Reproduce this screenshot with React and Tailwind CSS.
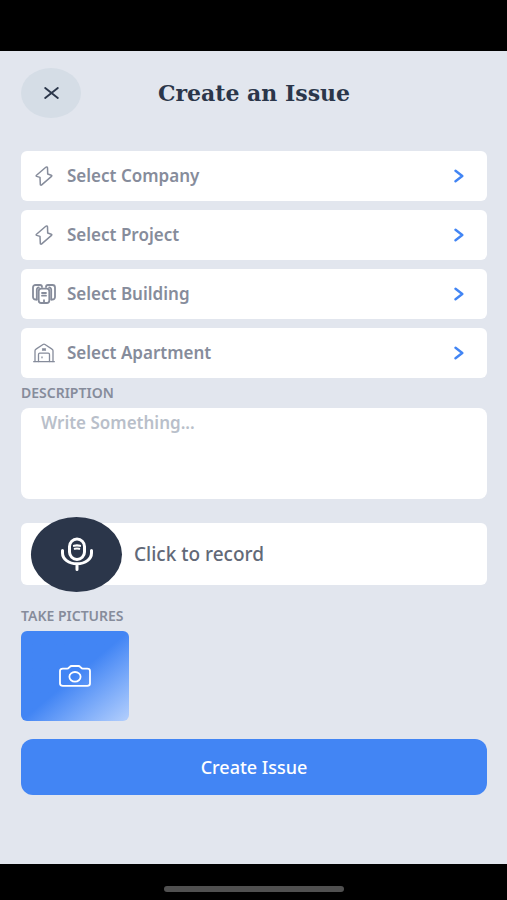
import React, { useState } from "react";

const BoltIcon = () => (
  <svg width="18" height="20" viewBox="0 0 18 20" fill="none" stroke="currentColor" strokeWidth="1.500" strokeLinejoin="round" strokeLinecap="round">
    <path d="M10.800 1.300 1.500 9.200c-.5.5-.4 1 .2 1.200l3.300 1 .3 6.900c.1.900.8 1.100 1.400.6l9.800-8.500c.5-.5.4-1-.2-1.200l-3.600-1.200-.2-6.200c-.1-.9-1-1.100-1.700-.5Z" />
  </svg>
);

const BuildingIcon = () => (
  <svg width="24" height="20" viewBox="0 0 24 20" fill="none" stroke="currentColor" strokeWidth="1.800" strokeLinejoin="round" strokeLinecap="round">
    <path d="M4.500 15.500H3.500A2.500 2.500 0 0 1 1 13V3.500A2.500 2.500 0 0 1 3.500 1H8a2 2 0 0 1 2 2" />
    <path d="M19.500 15.500h1A2.500 2.500 0 0 0 23 13V3.500A2.500 2.500 0 0 0 20.500 1H16a2 2 0 0 0-2 2" />
    <path d="M4.800 15.500V5.500a2 2 0 0 1 2-2M19.200 15.500V5.500a2 2 0 0 0-2-2" />
    <path d="M9.200 4.700h5.600a2.500 2.500 0 0 1 2.500 2.500v9.300a2.500 2.500 0 0 1-2.500 2.500H9.200a2.500 2.500 0 0 1-2.500-2.500V7.200a2.500 2.500 0 0 1 2.500-2.500Z" />
    <path d="M10 9h4M10 11.700h4M12 16.200V18.500" />
  </svg>
);

const ApartmentIcon = () => (
  <svg width="22" height="20" viewBox="0 0 22 20" fill="none" stroke="currentColor" strokeWidth="1.300" strokeLinejoin="round" strokeLinecap="round">
    <path d="M.7 18.700h20.600" />
    <path d="M2 18.500V7.800c0-.8.300-1.300 1-1.700l7-4.600c.7-.4 1.300-.4 2 0l7 4.600c.7.4 1 .9 1 1.700v10.700" />
    <path d="M5.500 18.500v-7c0-.8.500-1.300 1.300-1.300h8.400c.8 0 1.300.5 1.300 1.300v7" />
    <path d="M9.500 5.800h3M9.500 7.200h3M9 14v.8" />
  </svg>
);

const ChevronIcon = () => (
  <svg width="10" height="14" viewBox="0 0 10 14" fill="none" stroke="currentColor" strokeWidth="2.400" strokeLinecap="round" strokeLinejoin="round">
    <path d="M1.500 1.800 8.300 7 1.500 12.200" />
  </svg>
);

const MicIcon = () => (
  <svg width="34" height="34" viewBox="0 0 34 34" fill="none" stroke="currentColor" strokeWidth="3" strokeLinecap="round">
    <rect x="9.500" y="2" width="15" height="20.500" rx="7.500" />
    <path d="M2.500 13.500v2.500c0 6 6 10.800 14.500 10.800s14.500-4.800 14.500-10.800v-2.500M17 27v5.500" />
    <path d="M14 8.800c1.900-.6 4.100-.6 6 0M14.800 11.800c1.400-.4 3-.4 4.400 0" strokeWidth="2.200" />
  </svg>
);

const CameraIcon = () => (
  <svg width="32" height="22" viewBox="0 0 32 22" fill="none" stroke="currentColor" strokeWidth="1.800" strokeLinejoin="round">
    <path d="M3.800 3.600h4.400c.8 0 1.300-.3 1.800-.9l.8-.9c.5-.6 1-.8 1.800-.8h6.800c.8 0 1.300.2 1.800.8l.8.9c.5.6 1 .9 1.800.9h4.400c1.800 0 2.800.8 2.800 2.300v12.600c0 1.500-1 2.300-2.800 2.300H3.800C2 20.800 1 20 1 18.500V5.900c0-1.500 1-2.300 2.800-2.300Z" />
    <ellipse cx="16" cy="11.800" rx="5.600" ry="4.800" />
  </svg>
);

const fields = [
  { id: "company", label: "Select Company", icon: BoltIcon },
  { id: "project", label: "Select Project", icon: BoltIcon },
  { id: "building", label: "Select Building", icon: BuildingIcon },
  { id: "apartment", label: "Select Apartment", icon: ApartmentIcon },
];

const CreateIssue = () => {
  const [description, setDescription] = useState("");

  return (
    <div className="min-h-screen flex flex-col bg-black font-['Noto_Sans',sans-serif]">
      <main className="flex-1 mt-[51px] bg-[#e2e6ee] pl-[21px] pr-5 pt-[17px]">
        {/* Header */}
        <header className="grid grid-cols-[60px_1fr_60px] items-center">
          <button
            type="button"
            aria-label="Close"
            className="w-[60px] h-[50px] rounded-[50%] bg-[#d5dde6] text-[#2b364a] flex items-center justify-center"
          >
            <svg width="15" height="12" viewBox="0 0 15 12" fill="none" stroke="currentColor" strokeWidth="1.900" strokeLinecap="round">
              <path d="M1.200 1 13.800 11M13.800 1 1.200 11" />
            </svg>
          </button>
          <h1 className="text-center text-[22px] font-bold text-[#2b364a] font-['DejaVu_Serif',serif]">
            Create an Issue
          </h1>
        </header>

        <form onSubmit={(e) => e.preventDefault()}>
          {/* Pickers */}
          <div className="flex flex-col gap-[9px] mt-[33px]">
            {fields.map(({ id, label, icon: Icon }) => (
              <div
                key={id}
                className="h-[50px] flex items-center bg-white rounded-md pr-[23px] text-[#868c9b]"
              >
                <span className="w-[46px] flex justify-center">
                  <Icon />
                </span>
                <select
                  id={id}
                  aria-label={label}
                  defaultValue=""
                  className="flex-1 h-full appearance-none bg-transparent text-[17px] font-semibold outline-none"
                >
                  <option value="">{label}</option>
                </select>
                <span className="text-[#4285f4]">
                  <ChevronIcon />
                </span>
              </div>
            ))}
          </div>

          {/* Description */}
          <label
            htmlFor="description"
            className="block mt-[5px] mb-[5px] text-sm leading-5 font-semibold text-[#868c9b]"
          >
            DESCRIPTION
          </label>
          <textarea
            id="description"
            placeholder="Write Something..."
            value={description}
            onChange={(e) => setDescription(e.target.value)}
            className="block w-full h-[91px] resize-none rounded-lg bg-white px-5 py-[3px] text-[17px] leading-6 font-semibold text-[#868c9b] placeholder:text-[#b9bfca] outline-none"
          />

          {/* Voice note */}
          <div className="h-[62px] mt-6 flex items-center gap-3 bg-white rounded-md pl-[10px]">
            <button
              type="button"
              id="record"
              aria-labelledby="record-label"
              className="w-[91px] h-[75px] shrink-0 rounded-[50%] bg-[#2b364a] text-white flex items-center justify-center"
            >
              <MicIcon />
            </button>
            <label id="record-label" htmlFor="record" className="text-[19px] font-medium text-[#626978]">
              Click to record
            </label>
          </div>

          {/* Pictures */}
          <h2 className="mt-[21px] mb-[5px] text-sm leading-5 font-semibold text-[#868c9b]">
            TAKE PICTURES
          </h2>
          <button
            type="button"
            aria-label="Take a picture"
            className="w-[108px] h-[90px] rounded-md bg-linear-to-br from-[#4285f4] from-50% to-[#b4cffc] text-white flex items-center justify-center"
          >
            <CameraIcon />
          </button>

          <button
            type="submit"
            className="block w-full h-14 mt-[18px] rounded-xl bg-[#4285f4] text-white text-lg font-medium"
          >
            Create Issue
          </button>
        </form>
      </main>

      <footer className="h-9 flex justify-center pt-[22px]">
        <div className="w-[180px] h-[6px] rounded-full bg-[#505050]" />
      </footer>
    </div>
  );
};

export default CreateIssue;
